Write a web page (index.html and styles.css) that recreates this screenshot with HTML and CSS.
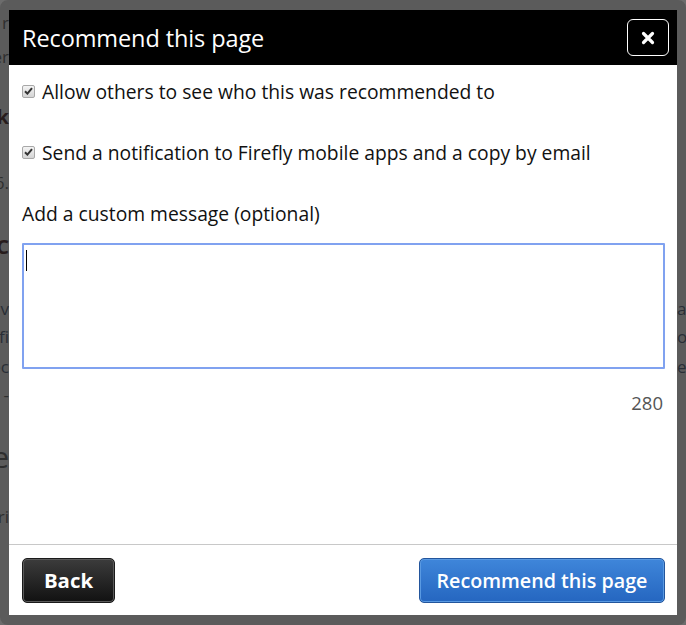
FILE: index.html
```html
<!DOCTYPE html>
<html>
<head>
<meta charset="utf-8">
<link rel="stylesheet" href="styles.css">
</head>
<body>
<div class="page">
  <div class="strip left">
    <p class="bg" style="top:12px">r</p>
    <p class="bg" style="top:46px">er</p>
    <p class="bg dark" style="top:106px">k</p>
    <p class="bg" style="top:172px">6.</p>
    <p class="bg dark" style="top:236px">C</p>
    <p class="bg blue" style="top:298px">v</p>
    <p class="bg blue" style="top:326px">fi</p>
    <p class="bg blue" style="top:356px">ec</p>
    <p class="bg" style="top:384px">- -</p>
    <p class="bg big" style="top:440px">e</p>
    <p class="bg" style="top:506px">ri</p>
  </div>
  <div class="strip right">
    <p class="bg blue" style="top:298px">a</p>
    <p class="bg blue" style="top:326px">o</p>
    <p class="bg blue" style="top:356px">e</p>
  </div>
</div>
<div class="modal">
  <div class="dialog">
    <div class="header">
      <h1 class="title">Recommend this page</h1>
      <button class="close" type="button" aria-label="Close"><svg width="14" height="14" viewBox="0 0 14 14"><path d="M2.5 2.5 L11.5 11.5 M11.5 2.5 L2.5 11.5" stroke="#fff" stroke-width="3.2" stroke-linecap="round"/></svg></button>
    </div>
    <div class="body">
      <label class="check"><span class="box"><svg width="9" height="8" viewBox="0 0 9 8"><path d="M1 4.2 L3.4 6.6 L8 1.2" stroke="#333" stroke-width="2" fill="none"/></svg></span>Allow others to see who this was recommended to</label>
      <label class="check second"><span class="box"><svg width="9" height="8" viewBox="0 0 9 8"><path d="M1 4.2 L3.4 6.6 L8 1.2" stroke="#333" stroke-width="2" fill="none"/></svg></span>Send a notification to Firefly mobile apps and a copy by email</label>
      <div class="label">Add a custom message (optional)</div>
      <div class="textarea"><span class="caret"></span></div>
      <div class="counter">280</div>
    </div>
    <div class="footer">
      <button class="btn back" type="button">Back</button>
      <button class="btn primary" type="button">Recommend this page</button>
    </div>
  </div>
</div>
</body>
</html>
```
FILE: styles.css
```css
html, body {
  margin: 0;
  padding: 0;
  height: 100%;
  overflow: hidden;
}
body {
  background: #6c6c6c;
  font-family: "Open Sans", "Noto Sans", sans-serif;
}
.page {
  display: flex;
  justify-content: space-between;
  height: 100%;
}
.strip {
  position: relative;
  width: 9px;
  overflow: hidden;
}
.bg {
  position: absolute;
  margin: 0;
  font-size: 17px;
  line-height: 22px;
  color: #333;
  white-space: nowrap;
}
.left .bg { right: 0; }
.right .bg { left: 0; }
.bg.dark { color: #2a1c1c; font-weight: bold; font-size: 20px; }
.bg.blue { color: #2c333d; }
.bg.big { font-size: 30px; line-height: 34px; }
.modal {
  position: fixed;
  inset: 0;
  border-style: solid;
  border-color: rgba(30, 30, 30, 0.22);
  border-width: 10px 9px 10px 9px;
  border-radius: 8px;
  box-sizing: border-box;
  display: flex;
}
.dialog {
  flex: 1;
  background: #fff;
  display: flex;
  flex-direction: column;
}
.header {
  background: #000;
  height: 55px;
  display: flex;
  align-items: center;
  justify-content: space-between;
  padding: 0 8px 0 13px;
  box-sizing: border-box;
}
.title {
  margin: 0;
  color: #fff;
  font-size: 23.5px;
  font-weight: 500;
  letter-spacing: -0.1px;
}
.close {
  width: 42px;
  height: 37px;
  background: #000;
  border: 1px solid #fff;
  border-radius: 6px;
  padding: 0;
  display: flex;
  align-items: center;
  justify-content: center;
}
.body {
  flex: 1;
  padding: 10px 12px 0 13px;
  display: flex;
  flex-direction: column;
  color: #111;
  font-size: 19.3px;
  font-weight: 500;
}
.check {
  display: flex;
  align-items: center;
  gap: 7px;
  height: 32px;
}
.box {
  width: 11px;
  height: 11px;
  border: 1px solid #a8a8a8;
  border-radius: 2px;
  background: linear-gradient(#f4f4f4, #d4d4d4);
  display: flex;
  align-items: center;
  justify-content: center;
  flex: none;
}
.check.second { margin-top: 29px; }
.label {
  margin-top: 30px;
  height: 32px;
  line-height: 32px;
}
.textarea {
  margin-top: 13px;
  height: 122px;
  border: 2px solid #80a2f0;
  border-radius: 1px;
  position: relative;
}
.caret {
  position: absolute;
  left: 2px;
  top: 5px;
  width: 1px;
  height: 21px;
  background: #000;
}
.counter {
  text-align: right;
  color: #555;
  margin-top: 21px;
  padding-right: 2px;
  font-size: 18.5px;
  font-weight: 400;
}
.footer {
  border-top: 1px solid #c8c8c8;
  height: 71px;
  box-sizing: border-box;
  display: flex;
  align-items: center;
  justify-content: space-between;
  padding: 0 12px 0 13px;
}
.btn {
  height: 45px;
  border-radius: 5px;
  font-family: "Open Sans", "Noto Sans", sans-serif;
  font-size: 20.4px;
  color: #fff;
  padding: 0;
}
.back {
  width: 93px;
  background: linear-gradient(#3c3c3c, #111);
  border: 1px solid #1a1a1a;
  box-shadow: inset 0 0 0 1px #5a5a5a;
  font-weight: bold;
}
.primary {
  width: 246px;
  background: linear-gradient(#3f86da, #2566c0);
  border: 1px solid #23559c;
  box-shadow: inset 0 0 0 1px #5a9ae2;
  font-weight: 600;
  font-size: 19.7px;
}
```
